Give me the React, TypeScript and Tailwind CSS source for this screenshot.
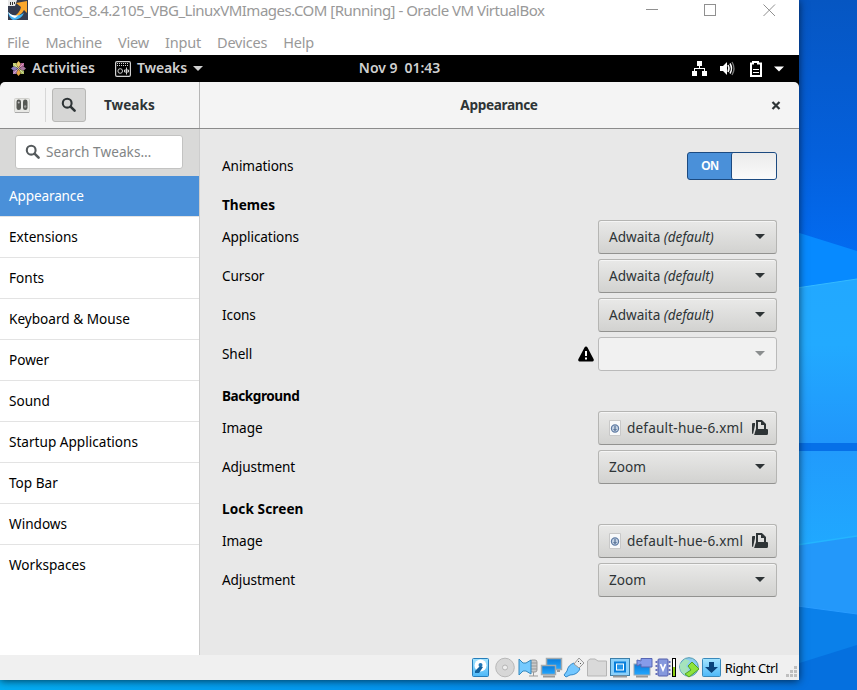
import React from 'react';

const sidebarItems = ['Appearance', 'Extensions', 'Fonts', 'Keyboard & Mouse', 'Power', 'Sound', 'Startup Applications', 'Top Bar', 'Windows', 'Workspaces'];

function Caret({ className = '' }: { className?: string }) {
  return (
    <svg className={className} width="10" height="5" viewBox="0 0 10 5">
      <path d="M0 0H10L5 5Z" fill="currentColor" />
    </svg>
  );
}

function SearchIcon({ className = '' }: { className?: string }) {
  return (
    <svg className={className} width="16" height="16" viewBox="0 0 16 16" fill="none" stroke="currentColor">
      <circle cx="6.2" cy="6.2" r="4.4" strokeWidth="2.1" />
      <path d="M9.8 9.8L13.6 13.6" strokeWidth="2.6" strokeLinecap="round" />
    </svg>
  );
}

function Wallpaper() {
  return (
    <svg className="absolute inset-0" width="857" height="690" viewBox="0 0 857 690">
      <defs>
        <linearGradient id="top" x1="0" y1="0" x2="0" y2="1">
          <stop offset="0" stopColor="#0656c2" />
          <stop offset=".6" stopColor="#0460dc" />
          <stop offset="1" stopColor="#026cf2" />
        </linearGradient>
        <linearGradient id="pane" x1="0" y1="0" x2="0" y2="1">
          <stop offset="0" stopColor="#22a8ff" />
          <stop offset=".4" stopColor="#22aaff" />
          <stop offset="1" stopColor="#2096fb" />
        </linearGradient>
        <linearGradient id="mid" x1="0" y1="0" x2="0" y2="1">
          <stop offset="0" stopColor="#219bfc" />
          <stop offset="1" stopColor="#20a9ff" />
        </linearGradient>
        <linearGradient id="strip" x1="0" y1="0" x2="1" y2="0">
          <stop offset="0" stopColor="#04adf2" />
          <stop offset=".5" stopColor="#0494ee" />
          <stop offset="1" stopColor="#0471dd" />
        </linearGradient>
      </defs>
      <rect width="857" height="260" fill="url(#top)" />
      <path d="M790 230L857 251V290H790Z" fill="#078aff" />
      <path d="M790 289L857 279V443H790Z" fill="url(#pane)" />
      <path d="M790 289L857 279" stroke="#35baff" />
      <rect x="790" y="443" width="67" height="8" fill="#0670e8" />
      <rect x="790" y="451" width="67" height="99" fill="url(#mid)" />
      <path d="M790 546L857 536V690H790Z" fill="#2398fa" />
      <path d="M790 546L857 536" stroke="#24b5ff" strokeWidth="1.5" />
      <path d="M790 605L857 614V690H790Z" fill="#0a80ea" />
      <path d="M790 605L857 614" stroke="#2a9cff" />
      <path d="M790 666L857 645V690H790Z" fill="#0570df" />
      <rect y="680" width="800" height="10" fill="url(#strip)" />
    </svg>
  );
}

function VBoxLogo() {
  return (
    <svg width="20" height="20" viewBox="0 0 20 20">
      <rect width="20" height="20" fill="#343b4f" />
      <path d="M0 0H9L7 6H0Z" fill="#e8e8e8" />
      <path d="M2.500 2V5M4.500 2V5M6.500 2V4" stroke="#333" />
      <path d="M8 3L19 1V13L16 10Q13 16 5 17Q12 13 13 7Z" fill="#fba72c" />
      <path d="M0 12Q7 19 16 13Q13 20 5 20Q1 18 0 12Z" fill="#43b5f5" />
      <path d="M0 12Q5 17 11 15L7 18Q2 17 0 12Z" fill="#fff" />
    </svg>
  );
}

function CentosLogo() {
  return (
    <svg width="15" height="15" viewBox="0 0 15 15">
      <path d="M7.500 0L10 3L7.500 7L5 3Z" fill="#e9c869" />
      <path d="M15 7.500L12 10L8 7.500L12 5Z" fill="#a7789e" />
      <path d="M7.500 15L5 12L7.500 8L10 12Z" fill="#e6a645" />
      <path d="M0 7.500L3 5L7 7.500L3 10Z" fill="#8d80c0" />
      <path d="M2 2H5L7 7L2 5Z" fill="#bccb69" />
      <path d="M10 2H13V5L8 7Z" fill="#b45e99" />
      <path d="M2 10L7 8L5 13H2Z" fill="#a876b4" />
      <path d="M8 8L13 10V13H10Z" fill="#a9bd60" />
      <path d="M2.500 2.500L12.500 12.500M12.500 2.500L2.500 12.500" stroke="#eee0cb" strokeWidth=".6" />
    </svg>
  );
}

function TweaksGlyph() {
  return (
    <svg width="16" height="16" viewBox="0 0 16 16" fill="none" stroke="#d2d2d2">
      <rect x=".6" y=".6" width="14.8" height="14.8" rx="1.3" strokeWidth="1.2" />
      <path d="M2 2.500H14M2 4.500H14" strokeDasharray="1 1" />
      <circle cx="5.200" cy="10" r="2.300" />
      <path d="M11.500 6.500V13.500M9.500 9H13.500V11H9.500Z" />
    </svg>
  );
}

function TitleBar() {
  return (
    <header className="flex h-[27px] items-start bg-white pl-2 text-[#999]">
      <div><VBoxLogo /></div>
      <h1 className="ml-[5px] text-[15px] leading-5 tracking-[-0.51px] whitespace-nowrap">CentOS_8.4.2105_VBG_LinuxVMImages.COM [Running] - Oracle VM VirtualBox</h1>
      <svg className="ml-auto mr-[23px]" width="130" height="20" viewBox="0 0 130 20" fill="none" stroke="#909090">
        <path d="M0 9.500H12M117.500 4.500L129 16M129 4.500L117.500 16" />
        <rect x="58.500" y="4.500" width="11" height="11" />
      </svg>
    </header>
  );
}

function TopBar() {
  return (
    <div className="grid h-[27px] grid-cols-[1fr_auto_1fr] items-center bg-black text-[14px] font-semibold text-[#d0d0d0]">
      <div className="flex items-center pl-[11px]">
        <CentosLogo />
        <span className="ml-1.5 w-[63px] pb-0.5 tracking-[0.05px]">Activities</span>
        <span className="ml-5"><TweaksGlyph /></span>
        <span className="ml-1.5 pb-0.5 tracking-[-0.15px]">Tweaks</span>
        <Caret className="ml-1.5" />
      </div>
      <span className="pb-0.5 tracking-[-0.05px] whitespace-pre">Nov 9  01:43</span>
      <div className="flex items-center justify-end pr-[15px] text-white">
        <svg width="92" height="16" viewBox="0 0 92 16">
          <path d="M5 0H10V5H8V7H13V10H15V15H10V10H12V8H3V10H5V15H0V10H2V7H7V5H5Z" fill="#fff" />
          <path d="M28 5H31L35 1V14L31 10H28Z" fill="#fff" />
          <path d="M36 4Q38 7.500 36 11M38 2.500Q41 7.500 38 12.500" fill="none" stroke="#fff" strokeWidth="1.500" />
          <path d="M40 1Q44 7.500 40 14" fill="none" stroke="#777" strokeWidth="1.300" />
          <path d="M59 2.500H61V1H66V2.500H69V15H59Z" fill="none" stroke="#fff" strokeWidth="2" />
          <path d="M61 8.500H67M61 11.500H67" stroke="#fff" />
          <path d="M82 5.500H92L87 10.500Z" fill="#fff" />
        </svg>
      </div>
    </div>
  );
}

function AppHeader() {
  return (
    <div className="flex h-[47px] shrink-0 rounded-t-[5px] border-b border-[#8b8b8b] bg-[#f4f4f4] font-bold text-[#2e3436]">
      <div className="flex w-[200px] items-center border-r border-[#b5b5b5]">
        <svg className="ml-[14px]" width="16" height="15" viewBox="0 0 16 15">
          <rect x=".5" y=".5" width="15" height="14" rx="1" fill="#e8e8e5" stroke="#d0d0cc" />
          <path d="M1 14.500H15" stroke="#aaa" />
          <rect x="2.500" y="1.500" width="4.500" height="10.500" rx="2.200" fill="#555753" />
          <rect x="9" y="1.500" width="4.500" height="10.500" rx="2.200" fill="#555753" />
          <circle cx="4.700" cy="4.500" r="1" fill="#bbb" />
          <circle cx="11.200" cy="8.500" r="1.200" fill="#999" />
        </svg>
        <div className="ml-[15px] h-[34px] w-px bg-[#d7d7d7]" />
        <button className="ml-1.5 flex h-[34px] w-[34px] items-center justify-center rounded-[3px] border border-[#b8b8b6] bg-[#d6d6d5]"><SearchIcon /></button>
        <span className="ml-[18px]">Tweaks</span>
      </div>
      <div className="flex flex-1 items-center">
        <span className="flex-1 text-center tracking-[-0.35px]">Appearance</span>
        <svg className="mr-[18px] -ml-[27px]" width="10" height="9" viewBox="0 0 10 9"><path d="M1.500 1L8.500 8M8.500 1L1.500 8" stroke="#2e3436" strokeWidth="2.200" /></svg>
      </div>
    </div>
  );
}

function Sidebar() {
  return (
    <aside className="flex w-[200px] shrink-0 flex-col border-r border-[#cdcdcd] bg-white">
      <div className="h-[47px] shrink-0 bg-[#d9d9d8] px-[15px] pt-1.5">
        <div className="flex h-[34px] w-[168px] items-center rounded-[3px] border border-[#c3c3c2] bg-white pl-[9px] text-[#828586]">
          <SearchIcon className="text-[#555a5c]" />
          <span className="ml-[5px] tracking-[0.07px]">Search Tweaks…</span>
        </div>
      </div>
      {sidebarItems.map((item, i) => (
        <div key={item} className={`flex h-[41px] shrink-0 items-center border-b pl-[9px] ${i === 0 ? 'bg-[#4a90d9] tracking-[-0.15px] text-white' : 'text-black'} ${i === sidebarItems.length - 1 ? 'border-transparent' : 'border-[#e3e3e3]'}`}>{item}</div>
      ))}
    </aside>
  );
}

function ComboBox({ value, isDefault, disabled }: { value?: string; isDefault?: boolean; disabled?: boolean }) {
  return (
    <button className={`flex h-[34px] w-[179px] items-center justify-between rounded-[3px] border pr-[11px] pl-2.5 ${disabled ? 'border-[#bababa] bg-[#f1f1f1] text-[#8b8e8f]' : 'border-[#b5b5b3] border-b-[#929290] bg-linear-to-b from-[#e9e9e8] to-[#d2d2d0] text-[#2e3436] shadow-[inset_0_1px_#f5f5f5]'}`}>
      <span>{value}{isDefault && <i className="tracking-[-0.1px]"> (default)</i>}</span>
      <Caret />
    </button>
  );
}

function FileButton() {
  return (
    <button className="flex h-[34px] w-[179px] items-center rounded-[3px] border border-[#b5b5b3] border-b-[#929290] bg-linear-to-b from-[#e9e9e8] to-[#d2d2d0] pl-2.5 text-[#2e3436] shadow-[inset_0_1px_#f5f5f5]">
      <svg width="13" height="16" viewBox="0 0 13 16">
        <path d="M.5.5H11.5V15.5H.5Z" fill="#f8f9fa" stroke="#c8c8c8" />
        <circle cx="6" cy="8.500" r="3.600" fill="#c6d4e5" stroke="#5f7ba3" strokeWidth="1.200" />
        <path d="M6 6V10.500L4.500 9M6 10.500L7.500 9" fill="none" stroke="#3f5c85" />
      </svg>
      <span className="ml-[5px] whitespace-nowrap tracking-[0.17px]">default-hue-6.xml</span>
      <svg className="ml-auto mr-2 shrink-0" width="16" height="15" viewBox="0 0 16 15">
        <path d="M5 9V1H9.500L13 4.500V9" fill="none" stroke="#2e3436" strokeWidth="2" />
        <path d="M9 1V5H13Z" fill="#2e3436" />
        <path d="M0 4Q0 3 1 3H3V5L1.500 12L1 14Q0 14 0 13Z" fill="#2e3436" />
        <path d="M4 9H15Q16 9 16 10V13.500Q16 15 14.500 15H2Q2.500 14.500 3 12Z" fill="#2e3436" />
      </svg>
    </button>
  );
}

function Row({ label, children }: { label: string; children: React.ReactNode }) {
  return <div className="flex h-[39px] items-center justify-between text-black"><span className="tracking-[-0.1px]">{label}</span><div className="flex items-center">{children}</div></div>;
}

function Settings() {
  return (
    <main className="flex-1 bg-[#e8e8e8] pr-[22px] pl-[22px] pt-[17px]">
      <Row label="Animations">
        <div className="flex h-[28px] w-[90px] overflow-hidden rounded-[3px] border border-[#1c4a80] bg-[#4a90d9]">
          <span className="w-[43px] pt-px pl-px text-center font-['Liberation_Sans'] text-[12px] leading-[25px] font-bold tracking-[-0.2px] text-white">ON</span>
          <div className="flex-1 rounded-l-[2px] border-l border-[#1c4a80] bg-linear-to-b from-[#ebebeb] to-[#fafafa]" />
        </div>
      </Row>
      <h2 className="h-[32px] pt-[10px] leading-5 font-bold text-black">Themes</h2>
      <Row label="Applications"><ComboBox value="Adwaita" isDefault /></Row>
      <Row label="Cursor"><ComboBox value="Adwaita" isDefault /></Row>
      <Row label="Icons"><ComboBox value="Adwaita" isDefault /></Row>
      <Row label="Shell">
        <svg className="mr-1" width="16" height="16" viewBox="0 0 16 16"><path d="M8 .5Q9 .5 9.5 1.5L15.8 13.5Q16 15.500 14.500 15.500H1.500Q0 15.500.2 13.500L6.500 1.500Q7 .5 8 .5Z" fill="#000" /><path d="M8 5V10M8 11.500V13.500" stroke="#fff" strokeWidth="2" /></svg>
        <ComboBox disabled />
      </Row>
      <h2 className="h-[35px] pt-[13px] leading-5 font-bold tracking-[-0.45px] text-black">Background</h2>
      <Row label="Image"><FileButton /></Row>
      <Row label="Adjustment"><ComboBox value="Zoom" /></Row>
      <h2 className="h-[35px] pt-[13px] leading-5 font-bold tracking-[0.1px] text-black">Lock Screen</h2>
      <Row label="Image"><FileButton /></Row>
      <Row label="Adjustment"><ComboBox value="Zoom" /></Row>
    </main>
  );
}

function DeviceIcons() {
  return (
    <svg className="shrink-0" width="251" height="22" viewBox="0 0 251 22">
      <defs>
        <linearGradient id="blue" x1="0" y1="0" x2="0" y2="1"><stop stopColor="#a4e4ff" /><stop offset="1" stopColor="#4db8f8" /></linearGradient>
        <linearGradient id="screen" x1="0" y1="0" x2="0" y2="1"><stop stopColor="#0a7bd9" /><stop offset="1" stopColor="#25a8ff" /></linearGradient>
      </defs>
      <rect x=".5" y="1.500" width="16" height="18" rx="1" fill="url(#blue)" stroke="#257dba" />
      <circle cx="8.500" cy="8.500" r="6" fill="#fff" /><circle cx="8.500" cy="8" r="2" fill="#2178b8" /><path d="M8 9L3 14V16H7L11 10Z" fill="#12619d" />
      <circle cx="33" cy="10.500" r="9.300" fill="#d7d7d7" stroke="#b8b8b8" /><circle cx="33" cy="10.500" r="2.500" fill="#eee" stroke="#b5b5b5" />
      <rect x="58" y="3" width="7" height="12" rx="2" fill="#c9c9c9" stroke="#999" /><path d="M58 6H65M58 9H65M58 12H65M61.500 15V19M57 19H66" stroke="#999" />
      <path d="M47 2L51 6H54L59 3V17L54 14H51L47 18Z" fill="#75caff" stroke="#3488bd" />
      <rect x="74.500" y="1.500" width="15" height="11" fill="url(#screen)" stroke="#a2aaae" strokeWidth="1.500" />
      <rect x="69.500" y="8.500" width="14" height="9" fill="url(#screen)" stroke="#a2aaae" strokeWidth="1.500" /><path d="M71 19.500H83M85 14H88" stroke="#999" strokeWidth="2" />
      <path d="M102 6L108 12Q105 18 98 18L94 20L92 18L95 14Q96 8 102 6Z" fill="#73c7ff" stroke="#3488c8" /><path d="M102 7L107 1L112 6L107 11Z" fill="#eee" stroke="#999" /><path d="M106 4L107 5M108 6L109 7" stroke="#555" />
      <path d="M115.500 19V4L118 2H123L126 4H134.500V19Z" fill="#d9d9d9" stroke="#b5b5b5" />
      <rect x="138.500" y="1.500" width="19" height="17" fill="#8bd0fa" stroke="#3c7fa9" /><rect x="142" y="4.500" width="12" height="11" fill="#087fdb" /><rect x="144.500" y="7" width="7" height="6" fill="#2495e8" stroke="#fff" /><path d="M141 19.500H155" stroke="#999" strokeWidth="2" />
      <rect x="162" y="7" width="16" height="11" fill="url(#screen)" stroke="#9ba6b0" /><path d="M164 19.500H176" stroke="#999" strokeWidth="2" /><path d="M165 3L169 4V1.500H180V10H169V7L165 9Z" fill="#869be9" stroke="#5766b3" />
      <rect x="186" y="2" width="10" height="17" rx="1" fill="#8598dd" stroke="#545eaa" /><path d="M184.500 4V19M197.500 4V19" stroke="#656fba" strokeWidth="2" strokeDasharray="2 2" />
      <path d="M188.500 7L191 13L193.500 7" fill="none" stroke="#fff" strokeWidth="1.800" />
      <rect x="200.500" y="1.500" width="3" height="18" fill="#fff" stroke="#000" /><rect x="201" y="10" width="2" height="9" fill="#8dcf12" />
      <circle cx="217" cy="10" r="9.300" fill="#8dcdf1" stroke="#4c97ae" /><path d="M208 7L213 2L218 4L214 9L217 12L213 18Q207 15 208 7Z" fill="#a5e3bb" /><path d="M216 9L220 5L227 12L217 20L213 17L219 13Z" fill="#8de33c" stroke="#52a31f" />
      <rect x="230.500" y="1.500" width="18" height="18" rx="1" fill="url(#blue)" stroke="#3989bb" /><path d="M237 5H242V10H246L239.500 16L233 10H237Z" fill="#09437b" />
    </svg>
  );
}

function StatusBar() {
  return (
    <footer className="flex h-[25px] items-center justify-end bg-[#f0f0f0] text-[13px] text-black">
      <DeviceIcons />
      <span className="ml-0.5 whitespace-nowrap tracking-[-0.4px]">Right Ctrl</span>
      <svg className="mr-0.5 ml-2 self-end" width="11" height="14" viewBox="0 0 11 14" fill="#bfbfbf"><path d="M8 0H11V3H8ZM4 4H7V7H4ZM8 4H11V7H8ZM0 8H3V11H0ZM4 8H7V11H4ZM8 8H11V11H8Z" /></svg>
    </footer>
  );
}

export default function App() {
  return (
    <div className="relative h-[690px] w-[857px] overflow-hidden bg-[#086fe4] font-['Noto_Sans',sans-serif] text-[13.6px] leading-5">
      <Wallpaper />
      <div className="relative flex h-[680px] w-[799px] flex-col bg-white shadow-[0_1px_8px_rgba(0,0,0,.65)]">
        <TitleBar />
        <nav className="flex h-7 items-center gap-4 bg-white pt-px pl-[7px] text-[14.5px] tracking-[-0.2px] text-[#999]">
          {['File', 'Machine', 'View', 'Input', 'Devices', 'Help'].map(item => <span key={item}>{item}</span>)}
        </nav>
        <TopBar />
        <div className="flex min-h-0 flex-1 flex-col bg-black">
          <AppHeader />
          <div className="flex min-h-0 flex-1"><Sidebar /><Settings /></div>
        </div>
        <StatusBar />
      </div>
    </div>
  );
}
